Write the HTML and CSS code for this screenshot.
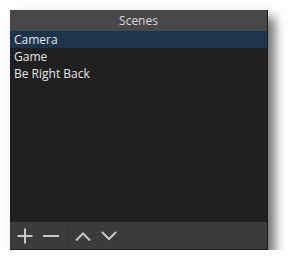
FILE: index.html
```html
<!DOCTYPE html>
<html>
<head>
<meta charset="utf-8">
<link rel="stylesheet" href="styles.css">
</head>
<body>
<div class="panel">
  <div class="title">Scenes</div>
  <ul class="list">
    <li class="item selected">Camera</li>
    <li class="item">Game</li>
    <li class="item">Be Right Back</li>
  </ul>
  <div class="toolbar">
    <button class="btn" aria-label="Add">
      <svg width="16" height="16" viewBox="0 0 16 16"><path d="M8 0.5V15.5M0.5 8H15.5" stroke="#c8c8c8" stroke-width="2" fill="none"/></svg>
    </button>
    <button class="btn" aria-label="Remove">
      <svg width="16" height="16" viewBox="0 0 16 16"><path d="M0 8H16" stroke="#c8c8c8" stroke-width="2" fill="none"/></svg>
    </button>
    <span class="sep"></span>
    <button class="btn" aria-label="Move up">
      <svg width="16" height="16" viewBox="0 0 16 16"><path d="M1 12.5L8 5.5L15 12.5" stroke="#c8c8c8" stroke-width="2" fill="none"/></svg>
    </button>
    <button class="btn" aria-label="Move down">
      <svg width="16" height="16" viewBox="0 0 16 16"><path d="M1 4L8 11L15 4" stroke="#c8c8c8" stroke-width="2" fill="none"/></svg>
    </button>
  </div>
</div>
</body>
</html>
```

FILE: styles.css
```css
html, body {
  margin: 0;
  padding: 0;
  background: #ffffff;
}
body {
  padding: 10px 0 0 10px;
  font-family: "Open Sans", "Noto Sans", sans-serif;
  font-size: 12px;
}
.panel {
  width: 258px;
  height: 240px;
  box-sizing: border-box;
  display: flex;
  flex-direction: column;
  background: #1f1f1f;
  border-right: 1px solid #1a1a1a;
  border-bottom: 1px solid #1a1a1a;
  box-shadow: 7px 7px 10px rgba(0, 0, 0, 0.55);
}
.title {
  height: 21px;
  line-height: 21px;
  background: #484848;
  color: #d8d8d8;
  text-align: center;
}
.list {
  list-style: none;
  margin: 0;
  padding: 0;
  flex: 1;
  background: #1f1f1f;
}
.item {
  height: 17px;
  line-height: 17px;
  padding-left: 4px;
  color: #e6e6e6;
}
.item.selected {
  background: #1b334b;
}
.toolbar {
  height: 27px;
  background: #3b3b3b;
  display: flex;
  align-items: center;
  padding-left: 2px;
}
.btn {
  background: none;
  border: 0;
  padding: 0;
  width: 26px;
  height: 27px;
  display: flex;
  align-items: center;
  justify-content: center;
}
.sep {
  width: 1px;
  height: 19px;
  background: #333333;
  margin: 0 2px 0 3px;
}
```
